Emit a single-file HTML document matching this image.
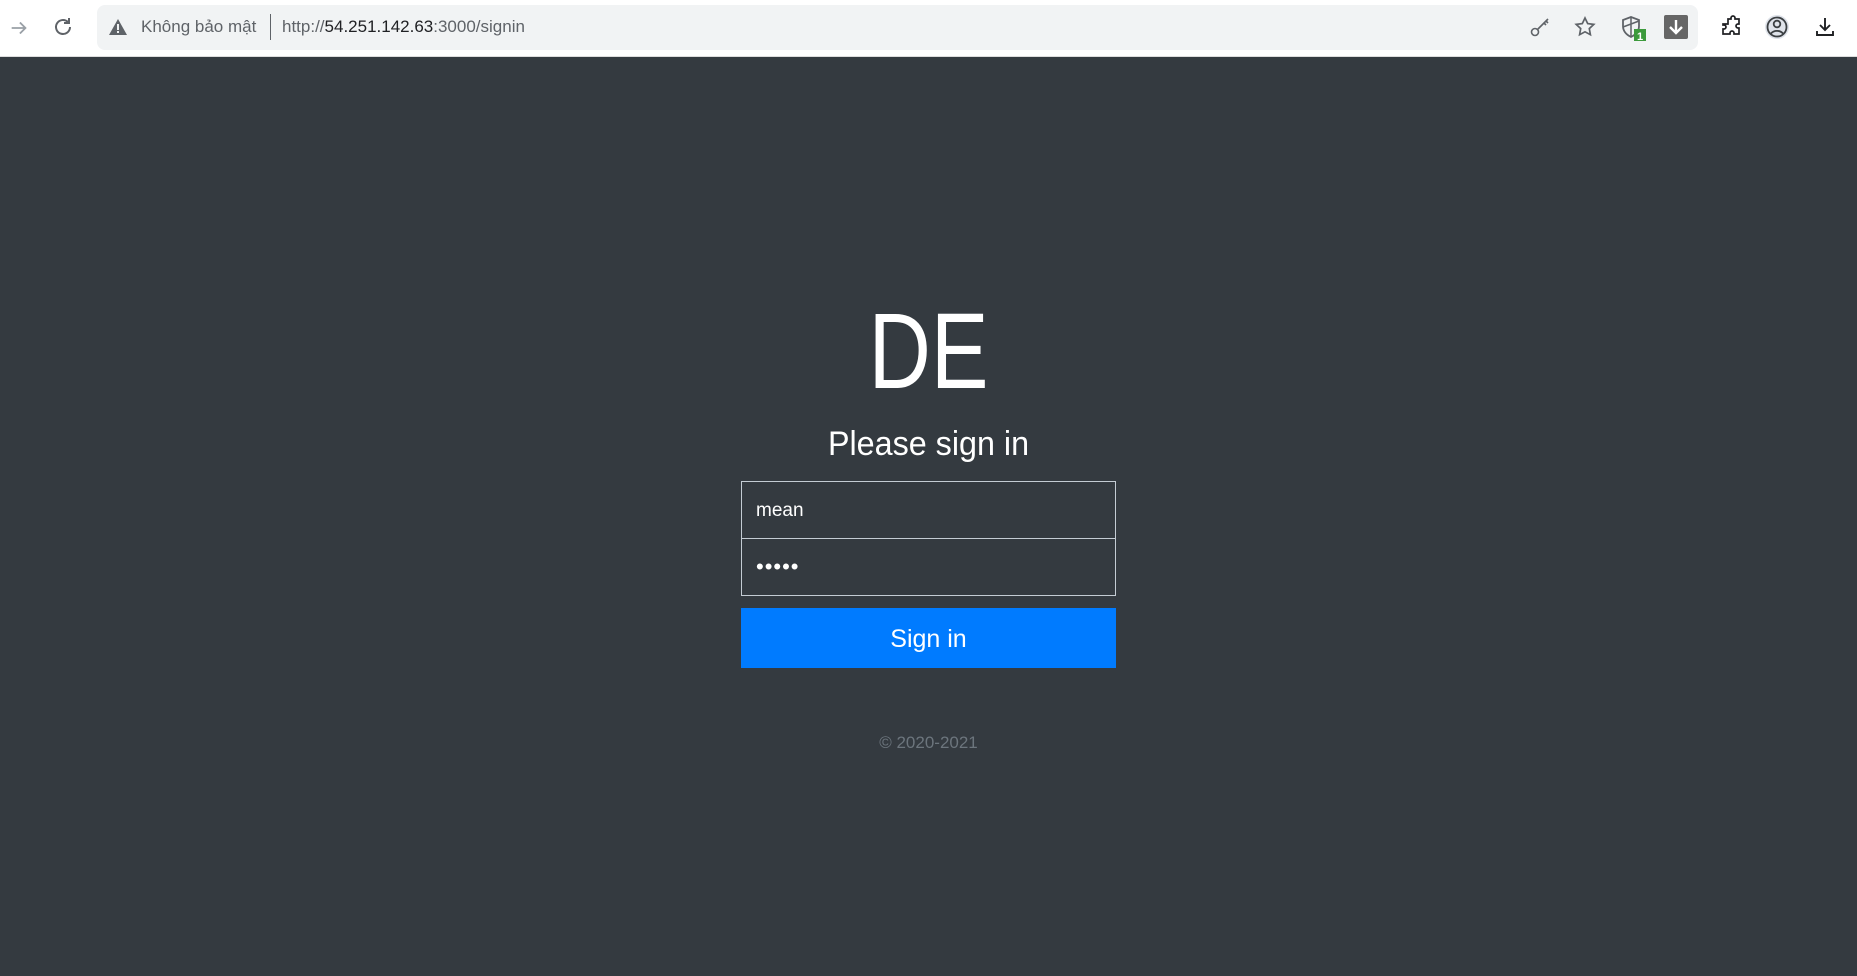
<!DOCTYPE html>
<html><head><meta charset="utf-8"><style>
*{margin:0;padding:0;box-sizing:border-box}
body{width:1857px;height:976px;background:#343a40;font-family:"Segoe UI","Liberation Sans",sans-serif;overflow:hidden;position:relative}
.bar{position:absolute;left:0;top:0;width:1857px;height:57px;background:#fff;border-bottom:1px solid #ddd}
.omni{position:absolute;left:97px;top:5px;width:1601px;height:45px;background:#f1f3f4;border-radius:8px}
.t{position:absolute;font-size:17px;color:#5f6368;top:17px;white-space:nowrap}
svg{position:absolute}
.c{position:absolute;left:0;width:1857px;text-align:center;color:#fff}
.inp{position:absolute;left:741px;width:375px;border:1px solid #c4ccd4;background:#343a40;color:#fff;font-size:19px;padding-left:14px}
</style></head><body>
<div class="bar">
<svg style="left:8px;top:17px" width="22" height="22" viewBox="0 0 24 24"><path d="M4 12h15M13 6l6 6-6 6" stroke="#9aa0a6" stroke-width="2" fill="none"/></svg>
<svg style="left:51px;top:15px" width="24" height="24" viewBox="0 0 24 24"><path d="M19 12a7 7 0 1 1-2.1-5M18 3v5h-5" stroke="#5f6368" stroke-width="2" fill="none"/></svg>
<div class="omni"></div>
<svg style="left:108px;top:18px" width="20" height="18" viewBox="0 0 20 18"><path d="M10 1L19 17H1z" fill="#5f6368"/><rect x="9" y="6" width="2" height="6" fill="#f1f3f4"/><rect x="9" y="13" width="2" height="2" fill="#f1f3f4"/></svg>
<div class="t" style="left:141px">Không bảo mật</div>
<div style="position:absolute;left:270px;top:14px;width:1px;height:26px;background:#5f6368"></div>
<div class="t" style="left:282px">http://<span style="color:#202124">54.251.142.63</span>:3000/signin</div>
<svg style="left:1528px;top:15px" width="24" height="24" viewBox="0 0 24 24"><circle cx="7" cy="17" r="3.5" stroke="#5f6368" stroke-width="1.6" fill="none"/><path d="M9.5 14.5L20 4M16 8l2 2M18 6l2 2" stroke="#5f6368" stroke-width="1.6" fill="none"/></svg>
<svg style="left:1573px;top:15px" width="24" height="24" viewBox="0 0 24 24"><path d="M12 3l2.7 5.6 6.1.8-4.5 4.2 1.1 6.1L12 16.8 6.6 19.7l1.1-6.1L3.2 9.4l6.1-.8z" stroke="#5f6368" stroke-width="1.7" fill="none"/></svg>
<svg style="left:1620px;top:15px" width="28" height="28" viewBox="0 0 28 28"><path d="M11 2l8 3v6c0 6-4 9-8 11-4-2-8-5-8-11V5z" stroke="#5f6368" stroke-width="1.8" fill="none"/><path d="M11 2v20M3 12l16-6" stroke="#5f6368" stroke-width="1.5"/><rect x="14" y="14" width="12" height="12" fill="#3c9a3c"/><text x="17" y="25" font-size="11" font-weight="bold" fill="#fff" font-family="Liberation Sans">1</text></svg>
<div style="position:absolute;left:1664px;top:15px;width:24px;height:24px;background:#666;border-radius:2px"></div>
<svg style="left:1664px;top:15px" width="24" height="24" viewBox="0 0 24 24"><path d="M12 5v13M6 12l6 6 6-6" stroke="#fff" stroke-width="2.4" fill="none"/></svg>
<svg style="left:1719px;top:15px" width="24" height="24" viewBox="0 0 24 24"><path d="M9 4h3v-1a2 2 0 0 1 4 0v1h4v5h-1a2 2 0 0 0 0 4h1v6h-5v-1a2 2 0 0 0-4 0v1H4v-5h1a2 2 0 0 0 0-4H4V9h5z" stroke="#202124" stroke-width="1.7" fill="none"/></svg>
<svg style="left:1764px;top:14px" width="26" height="26" viewBox="0 0 26 26"><circle cx="13" cy="13" r="12" fill="#dfe3ea"/><circle cx="13" cy="13" r="9.5" stroke="#3c4043" stroke-width="1.8" fill="none"/><circle cx="13" cy="10" r="3.3" stroke="#3c4043" stroke-width="1.8" fill="none"/><path d="M7 19.5c3-3.5 9-3.5 12 0" stroke="#3c4043" stroke-width="1.8" fill="none"/></svg>
<svg style="left:1813px;top:15px" width="24" height="24" viewBox="0 0 24 24"><path d="M12 3v12M7 10l5 5 5-5M4 16v4h16v-4" stroke="#202124" stroke-width="1.9" fill="none"/></svg>
</div>
<div class="c" style="top:286px;font-size:108px;line-height:130px;transform:scaleX(0.8)">DE</div>
<div class="c" style="top:420px;font-size:34px;line-height:48px;transform:scaleX(0.95)">Please sign in</div>
<div class="inp" style="top:481px;height:58px;line-height:58px">mean</div>
<div class="inp" style="top:538px;height:58px;line-height:56px;font-size:22px;letter-spacing:1px">•••••</div>
<div style="position:absolute;left:741px;top:608px;width:375px;height:60px;background:#007bff;color:#fff;text-align:center;line-height:62px;font-size:25px">Sign in</div>
<div class="c" style="top:731px;font-size:17px;color:#6c757d;line-height:24px">© 2020-2021</div>
</body></html>
